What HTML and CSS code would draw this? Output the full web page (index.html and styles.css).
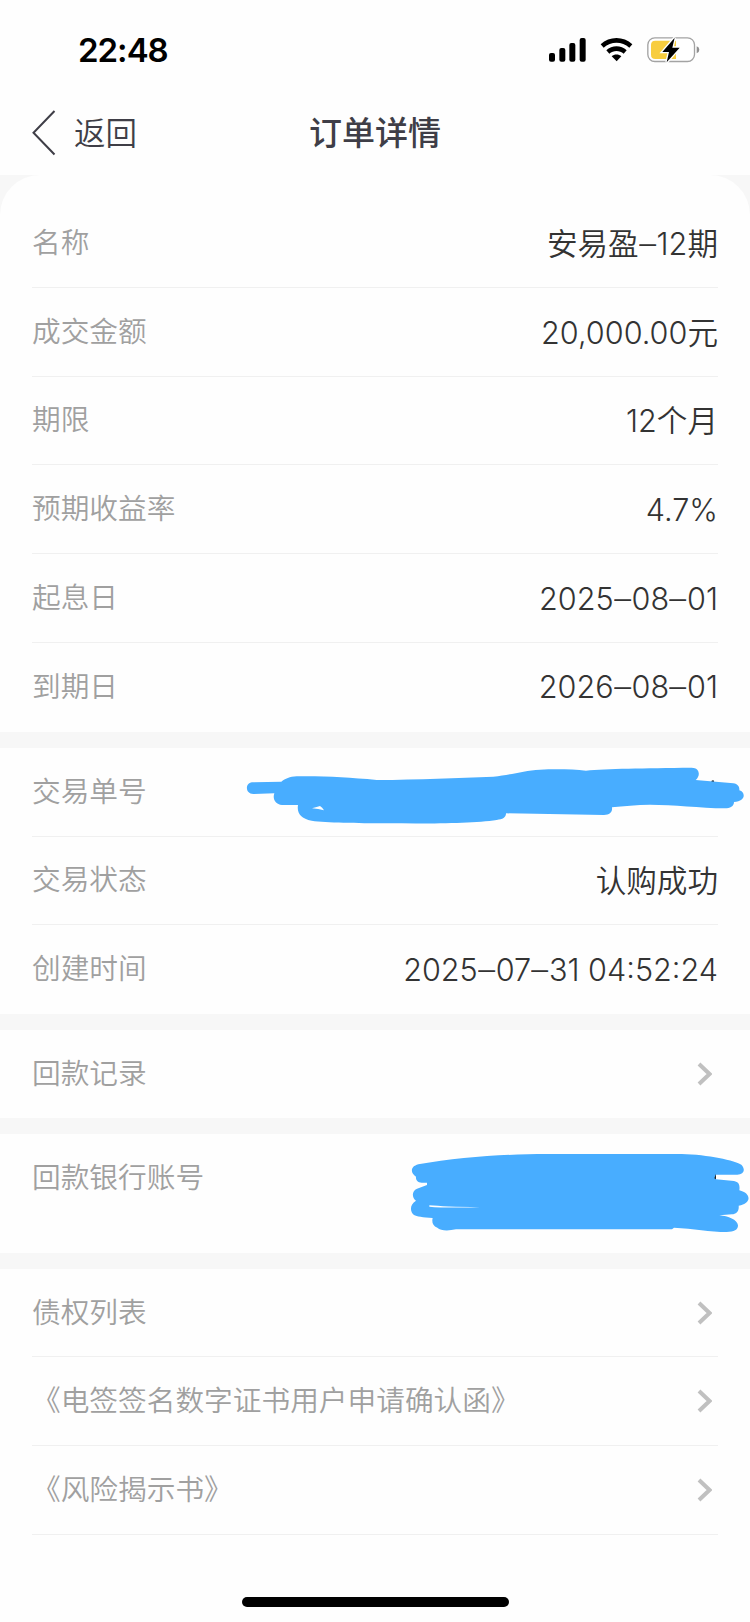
FILE: index.html
```html
<!DOCTYPE html>
<html lang="zh-CN">
<head>
    <meta charset="UTF-8">
    <meta name="viewport" content="width=device-width, initial-scale=1.0">
    <title>订单详情</title>
    <link rel="stylesheet" href="styles.css">
</head>
<body>
    <div class="status-bar">
        <span class="time">22:48</span>
        <svg class="status-icons" viewBox="0 0 570 150">
            <!-- signal -->
            <rect x="57" y="84" width="18" height="26" rx="6"/>
            <rect x="88" y="69" width="18" height="41" rx="6"/>
            <rect x="118" y="54" width="18" height="56" rx="6"/>
            <rect x="149" y="39" width="18" height="71" rx="6"/>
            <!-- wifi -->
            <path d="M212 58C238 33 281 33 307 58L298 68C276 48 243 48 221 68Z"/>
            <path d="M229 76C246 60 273 60 290 76L281 86C269 75 250 75 238 86Z"/>
            <path d="M245 94C253 87 266 87 274 94L260 109Z"/>
            <!-- battery -->
            <rect x="353.500" y="38.500" width="140" height="71" rx="21" fill="#fff" stroke="#a3a3a3" stroke-width="4"/>
            <path d="M376 47H438V102H376Q363 102 363 89V60Q363 47 376 47Z" fill="#f8cd3e"/>
            <path d="M500 64Q508 67 508 74Q508 82 500 85Z" fill="#8f8f8f"/>
            <path class="bolt" d="M434 38L397 81H417L410 112L449 68H427Z"/>
        </svg>
    </div>

    <div class="nav-bar">
        <div class="back">
            <svg class="back-icon" viewBox="0 0 24 46"><path d="M22.500 1L1.500 22.700L22.500 44.500"/></svg>
            <span>返回</span>
        </div>
        <h1>订单详情</h1>
    </div>

    <div class="content">
        <div class="card card-first">
            <div class="row"><span class="label">名称</span><span class="value value-cn">安易盈<span class="dash">–</span>12期</span></div>
            <div class="row"><span class="label">成交金额</span><span class="value value-cn">20,000.00元</span></div>
            <div class="row"><span class="label">期限</span><span class="value value-cn">12个月</span></div>
            <div class="row"><span class="label">预期收益率</span><span class="value">4.7%</span></div>
            <div class="row"><span class="label">起息日</span><span class="value">2025<span class="dash">–</span>08<span class="dash">–</span>01</span></div>
            <div class="row"><span class="label">到期日</span><span class="value">2026<span class="dash">–</span>08<span class="dash">–</span>01</span></div>
        </div>

        <div class="card">
            <div class="row">
                <span class="label">交易单号</span>
                <svg class="scribble scribble-order" viewBox="0 0 1560 240">
                    <path class="ink" d="M1444 78L1450 75L1454 84H1445Z"/>
                    <path d="M66 82L154 80C166 71 179 65 200 64C290 63 355 67 440 75C570 74 680 69 790 65C845 60 880 46 930 44C980 42 1030 43 1068 47C1130 40 1240 40 1385 38C1410 38 1412 63 1397 75L1510 85C1524 87 1529 96 1528 106C1548 112 1547 139 1512 141C1512 154 1500 160 1485 160C1410 159 1330 149 1260 149C1220 149 1180 154 1146 157C1148 171 1139 180 1122 180L828 175C828 188 818 193 800 195C730 206 600 206 470 205C380 204 290 204 245 197C212 191 200 173 204 150H156C136 148 127 132 133 115L70 117C45 117 45 84 66 82Z"/>
                    <path class="gap" d="M246 160Q262 155 270 153Q277 157 282 166Q265 162 246 160Z"/>
                </svg>
            </div>
            <div class="row"><span class="label">交易状态</span><span class="value value-cn">认购成功</span></div>
            <div class="row"><span class="label">创建时间</span><span class="value">2025<span class="dash">–</span>07<span class="dash">–</span>31 04:52:24</span></div>
        </div>

        <div class="card card-record">
            <div class="row">
                <span class="label">回款记录</span>
                <svg class="arrow" viewBox="0 0 15 24"><path d="M2 2L12.500 12L2 22"/></svg>
            </div>
        </div>

        <div class="card card-bank">
            <div class="row">
                <span class="label">回款银行账号</span>
                <svg class="scribble scribble-bank" viewBox="0 0 1050 330">
                    <path d="M55 73C180 51 320 42 440 42H830C910 42 990 57 1024 74C1038 89 1031 104 1012 104H948V118L1002 123C1018 126 1020 137 1018 151C1056 161 1054 190 1016 197C1018 214 1008 223 996 223L958 226C985 228 1012 239 1014 256C1014 270 1002 276 980 276C930 276 880 266 822 263L816 268H168C145 273 122 273 112 263C98 258 95 246 98 234C68 233 50 229 42 225C29 215 29 193 48 182C34 172 36 152 51 146L81 135V128H65C52 127 47 119 48 110C31 99 30 80 55 73Z"/>
                    <path class="gap" d="M88 196Q130 200 240 202Q130 204 88 200Z"/>
                    <path class="ink" d="M948 101V118L943 115Z"/>
                </svg>
            </div>
        </div>

        <div class="card card-last">
            <div class="row">
                <span class="label">债权列表</span>
                <svg class="arrow" viewBox="0 0 15 24"><path d="M2 2L12.500 12L2 22"/></svg>
            </div>
            <div class="row">
                <span class="label">《电签签名数字证书用户申请确认函》</span>
                <svg class="arrow" viewBox="0 0 15 24"><path d="M2 2L12.500 12L2 22"/></svg>
            </div>
            <div class="row">
                <span class="label">《风险揭示书》</span>
                <svg class="arrow" viewBox="0 0 15 24"><path d="M2 2L12.500 12L2 22"/></svg>
            </div>
        </div>
    </div>

    <div class="home-indicator"></div>
</body>
</html>
```

FILE: styles.css
```css
* {
    box-sizing: border-box;
}
body {
    margin: 0;
    width: 750px;
    height: 1622px;
    display: flex;
    flex-direction: column;
    overflow: hidden;
    background-color: #fefefe;
    color: #333333;
    font-family: Inter, "Noto Sans CJK SC", sans-serif;
}
svg {
    display: block;
}

/* Status bar */
.status-bar {
    height: 100px;
    padding: 25px 30px 0 78px;
    display: flex;
    justify-content: space-between;
    align-items: flex-start;
}
.time {
    font-size: 33px;
    font-weight: 600;
    line-height: 50px;
    letter-spacing: -1px;
    color: #000000;
}
.status-icons {
    width: 190px;
    height: 50px;
}
.bolt {
    stroke: #ffffff;
    stroke-width: 8px;
    paint-order: stroke;
}

/* Navigation */
.nav-bar {
    height: 75px;
    padding: 0 32px 9px;
    display: grid;
    grid-template-columns: 1fr auto 1fr;
    align-items: center;
    color: #3f3e47;
}
.back {
    display: flex;
    align-items: center;
    gap: 18px;
    font-size: 31.5px;
    font-weight: 350;
    line-height: 46px;
}
.back span {
    padding-top: 2px;
}
.back-icon {
    width: 24px;
    height: 46px;
    fill: none;
    stroke: #3f3e47;
    stroke-width: 2px;
}
h1 {
    margin: 0;
    font-size: 33px;
    font-weight: 500;
    line-height: 46px;
}

/* Detail cards */
.content {
    display: flex;
    flex-direction: column;
    gap: 16px;
    background-color: #f7f7f7;
}
.card {
    padding: 0 32px;
    background-color: #fefefe;
}
.card-first {
    padding-top: 24px;
    border-radius: 40px 40px 0 0;
}
.row {
    position: relative;
    height: 88.8px;
    display: flex;
    justify-content: space-between;
    align-items: center;
    border-bottom: 1px solid #f0f0f0;
}
.row:last-child {
    border-bottom-color: transparent;
}
.card-last .row:last-child {
    border-bottom-color: #f0f0f0;
}
.label {
    padding-bottom: 5px;
    font-size: 28.7px;
    font-weight: 350;
    color: #a0a0a0;
}
.value {
    font-size: 30.6px;
    font-weight: 350;
    color: #333333;
}
.value-cn {
    padding-bottom: 2px;
}
.dash {
    display: inline-block;
    margin: 0 1.3px;
    transform: scaleX(1.1);
}
.arrow {
    width: 15px;
    height: 24px;
    margin-right: 6px;
    fill: none;
    stroke: #c0c0c0;
    stroke-width: 4px;
}
.card-record .row {
    height: 88px;
}
.card-bank {
    height: 118.6px;
}
.card-last .row {
    height: 88.6px;
}

/* Marker strokes over the private numbers */
.scribble {
    position: absolute;
    fill: #48adff;
}
.scribble-order {
    left: 198px;
    top: 7px;
    width: 520px;
    height: 80px;
}
.scribble-bank {
    left: 368px;
    top: 6px;
    width: 350px;
    height: 110px;
}
.gap {
    fill: #fefefe;
}
.ink {
    fill: #222222;
}

.home-indicator {
    width: 267px;
    height: 10px;
    margin: auto auto 15px;
    border-radius: 5px;
    background-color: #000000;
}
```
